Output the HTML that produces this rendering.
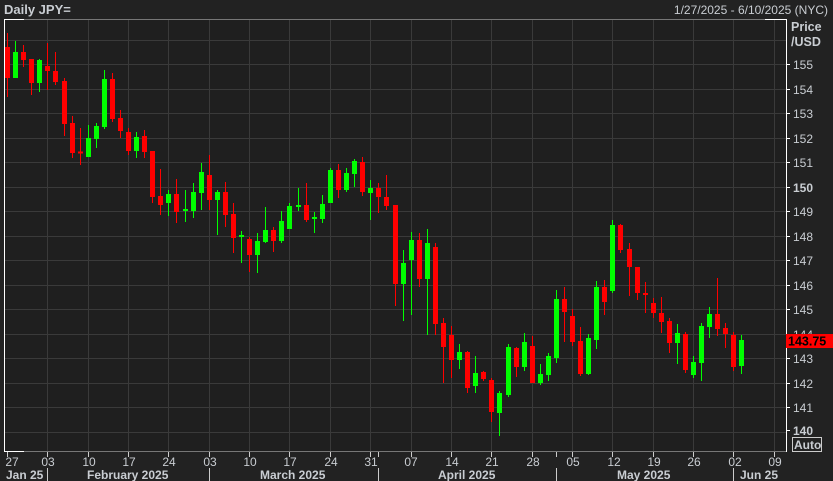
<!DOCTYPE html>
<html><head><meta charset="utf-8"><style>
html,body{margin:0;padding:0;background:#212121;}
svg{display:block;font-family:"Liberation Sans",Arial,sans-serif;}
</style></head><body>
<svg width="833" height="481" viewBox="0 0 833 481" xmlns="http://www.w3.org/2000/svg">
<rect width="833" height="481" fill="#222222"/>
<rect x="4" y="19" width="782" height="433" fill="#1f1f1f"/>
<g stroke="#3a3a3a" stroke-width="1" shape-rendering="crispEdges">
<path d="M4 40.5H786M4 64.5H786M4 89.5H786M4 113.5H786M4 138.5H786M4 162.5H786M4 187.5H786M4 211.5H786M4 236.5H786M4 260.5H786M4 285.5H786M4 309.5H786M4 334.5H786M4 358.5H786M4 383.5H786M4 407.5H786M4 432.5H786"/>
<path d="M47.5 19V452M88.5 19V452M128.5 19V452M168.5 19V452M209.5 19V452M249.5 19V452M289.5 19V452M330.5 19V452M370.5 19V452M411.5 19V452M451.5 19V452M491.5 19V452M532.5 19V452M572.5 19V452M612.5 19V452M653.5 19V452M693.5 19V452M733.5 19V452M774.5 19V452"/>
</g>
<g stroke-width="1" shape-rendering="crispEdges" fill="none">
<path d="M4 19.5H786M4 451.5H786" stroke="#777"/>
<path d="M4.5 19V452M4 19.5H24M4 451.5H24M765 19.5H786.5V452" stroke="#fff"/>
<path d="M786 64.5H790M786 89.5H790M786 113.5H790M786 138.5H790M786 162.5H790M786 187.5H790M786 211.5H790M786 236.5H790M786 260.5H790M786 285.5H790M786 309.5H790M786 334.5H790M786 358.5H790M786 383.5H790M786 407.5H790M786 430.5H790" stroke="#fff"/>
<path d="M7.5 452V457M47.5 452V457M88.5 452V457M128.5 452V457M168.5 452V457M209.5 452V457M249.5 452V457M289.5 452V457M330.5 452V457M370.5 452V457M378.5 452V457M411.5 452V457M451.5 452V457M491.5 452V457M532.5 452V457M556.5 452V457M572.5 452V457M612.5 452V457M653.5 452V457M693.5 452V457M733.5 452V457M774.5 452V457" stroke="#ccc"/>
<path d="M47.5 468V481M209.5 468V481M378.5 468V481M556.5 468V481M733.5 468V481" stroke="#ccc"/>
</g>
<g fill="none" shape-rendering="crispEdges">
<path stroke="#ff0000" stroke-width="1" d="M7.5 33V97M23.5 45V67M31.5 59V95M47.5 43V90M55.5 52V85M64.5 78V136M72.5 116V158M80.5 128V165M112.5 73V122M120.5 110V138M128.5 128V155M144.5 130V158M152.5 151V203M160.5 169V215M176.5 179V223M209.5 155V210M225.5 182V227M233.5 203V253M249.5 237V272M273.5 227V252M306.5 183V222M338.5 164V198M362.5 157V196M378.5 183V213M386.5 175V210M395.5 205V306M419.5 233V287M435.5 243V335M443.5 318V383M451.5 326V378M467.5 351V393M483.5 371V381M491.5 378V422M516.5 347V377M532.5 336V383M564.5 287V342M572.5 309V346M580.5 327V376M604.5 280V315M620.5 224V253M629.5 243V296M637.5 267V300M645.5 282V313M653.5 298V318M661.5 297V333M669.5 318V353M685.5 332V373M717.5 278V336M725.5 323V348M733.5 332V371"/>
<path stroke="#ff0000" stroke-width="5" d="M7.5 47V78M23.5 52V60M31.5 59V83M47.5 66V71M55.5 71V82M64.5 81V124M72.5 123V153M80.5 151.5V153.5M112.5 79V119M120.5 118V131M128.5 132V151M144.5 136V152M152.5 151V197M160.5 196V205M176.5 194V212M209.5 175V200M225.5 192V215M233.5 214V238M249.5 239V255M273.5 230V241M306.5 205V220M338.5 170V190M362.5 162V192M378.5 188V197M386.5 197V206M395.5 205V284M419.5 240V279M435.5 247V324M443.5 323V347M451.5 335V360M467.5 352V388M483.5 372V379M491.5 380V412M516.5 348V367M532.5 346V383M564.5 299V312M572.5 316V342M580.5 341V374M604.5 287V302M620.5 225V250M629.5 249V267M637.5 267V293M645.5 293V295M653.5 303V313M661.5 313V322M669.5 321V343M685.5 334V370M717.5 314V329M725.5 328V334M733.5 335V367"/>
<path stroke="#00ff00" stroke-width="1" d="M15.5 41V78M39.5 59V92M88.5 125V157M96.5 123V148M104.5 70V129M136.5 132V158M168.5 190V216M185.5 190V222M193.5 183V218M201.5 163V210M217.5 190V235M241.5 231V263M257.5 233V273M265.5 207V243M281.5 211V243M289.5 203V229M298.5 188V211M314.5 212V233M322.5 195V223M330.5 168V203M346.5 168V192M354.5 159V187M370.5 180V220M403.5 250V321M411.5 232V315M427.5 229V335M459.5 344V369M475.5 356V393M499.5 391V436M508.5 344V397M524.5 333V371M540.5 364V385M548.5 353V381M556.5 290V363M588.5 334V375M596.5 281V349M612.5 220V293M677.5 324V364M693.5 356V378M701.5 323V381M709.5 307V338M741.5 335V374"/>
<path stroke="#00ff00" stroke-width="5" d="M15.5 52V78M39.5 60V83M88.5 138V157M96.5 126V139M104.5 79V127M136.5 137V151M168.5 194V203M185.5 209V211M193.5 192V211M201.5 172V193M217.5 192V200M241.5 235V237M257.5 241V255M265.5 230V242M281.5 221V241M289.5 206V229M298.5 205V207M314.5 217V219M322.5 204V219M330.5 170V203M346.5 173V190M354.5 161V174M370.5 188V193M403.5 263V284M411.5 240V260M427.5 243V279M459.5 352V360M475.5 373V386M499.5 393V413M508.5 347V395M524.5 342V367M540.5 374V383M548.5 356V375M556.5 299V358M588.5 338V374M596.5 287V340M612.5 225V291M677.5 333V343M693.5 362V375M701.5 326V363M709.5 314V327M741.5 340V366"/>
</g>
<text x="4" y="14" font-size="13" font-weight="bold" fill="#c9cdd2">Daily JPY=</text>
<text x="828" y="14" font-size="12" fill="#c9cdd2" text-anchor="end">1/27/2025 - 6/10/2025 (NYC)</text>
<text x="791" y="31" font-size="12.5" font-weight="bold" fill="#c9cdd2">Price</text>
<text x="791" y="46" font-size="12.5" font-weight="bold" fill="#c9cdd2">/USD</text>
<g font-size="12" fill="#c9cdd2">
<text x="793" y="69">155</text><text x="793" y="94">154</text><text x="793" y="118">153</text><text x="793" y="143">152</text><text x="793" y="167">151</text>
<text x="793" y="192" font-weight="bold">150</text>
<text x="793" y="216">149</text><text x="793" y="241">148</text><text x="793" y="265">147</text><text x="793" y="290">146</text><text x="793" y="314">145</text><text x="793" y="339">144</text><text x="793" y="363">143</text><text x="793" y="388">142</text><text x="793" y="412">141</text>
<text x="793" y="435" font-weight="bold">140</text>
</g>
<rect x="786" y="334" width="47" height="14" fill="#ff0000"/>
<text x="788" y="345.5" font-size="12.5" font-weight="bold" fill="#000">143.75</text>
<rect x="792.5" y="437.5" width="29" height="14" fill="none" stroke="#ccc" stroke-width="1"/>
<text x="794" y="449" font-size="12" font-weight="bold" fill="#c9cdd2">Auto</text>
<g font-size="12" fill="#c9cdd2" text-anchor="middle">
<text x="12" y="466">27</text><text x="48" y="466">03</text><text x="89" y="466">10</text><text x="129" y="466">17</text><text x="169" y="466">24</text><text x="210" y="466">03</text><text x="250" y="466">10</text><text x="290" y="466">17</text><text x="331" y="466">24</text><text x="371" y="466">31</text><text x="411" y="466">07</text><text x="452" y="466">14</text><text x="492" y="466">21</text><text x="533" y="466">28</text><text x="573" y="466">05</text><text x="614" y="466">12</text><text x="654" y="466">19</text><text x="694" y="466">26</text><text x="735" y="466">02</text><text x="775" y="466">09</text>
</g>
<g font-size="12" font-weight="bold" fill="#c9cdd2">
<text x="6" y="479">Jan 25</text>
<text x="87" y="479">February 2025</text>
<text x="260" y="479">March 2025</text>
<text x="438" y="479">April 2025</text>
<text x="617" y="479">May 2025</text>
<text x="740" y="479">Jun 25</text>
</g>
</svg>
</body></html>
